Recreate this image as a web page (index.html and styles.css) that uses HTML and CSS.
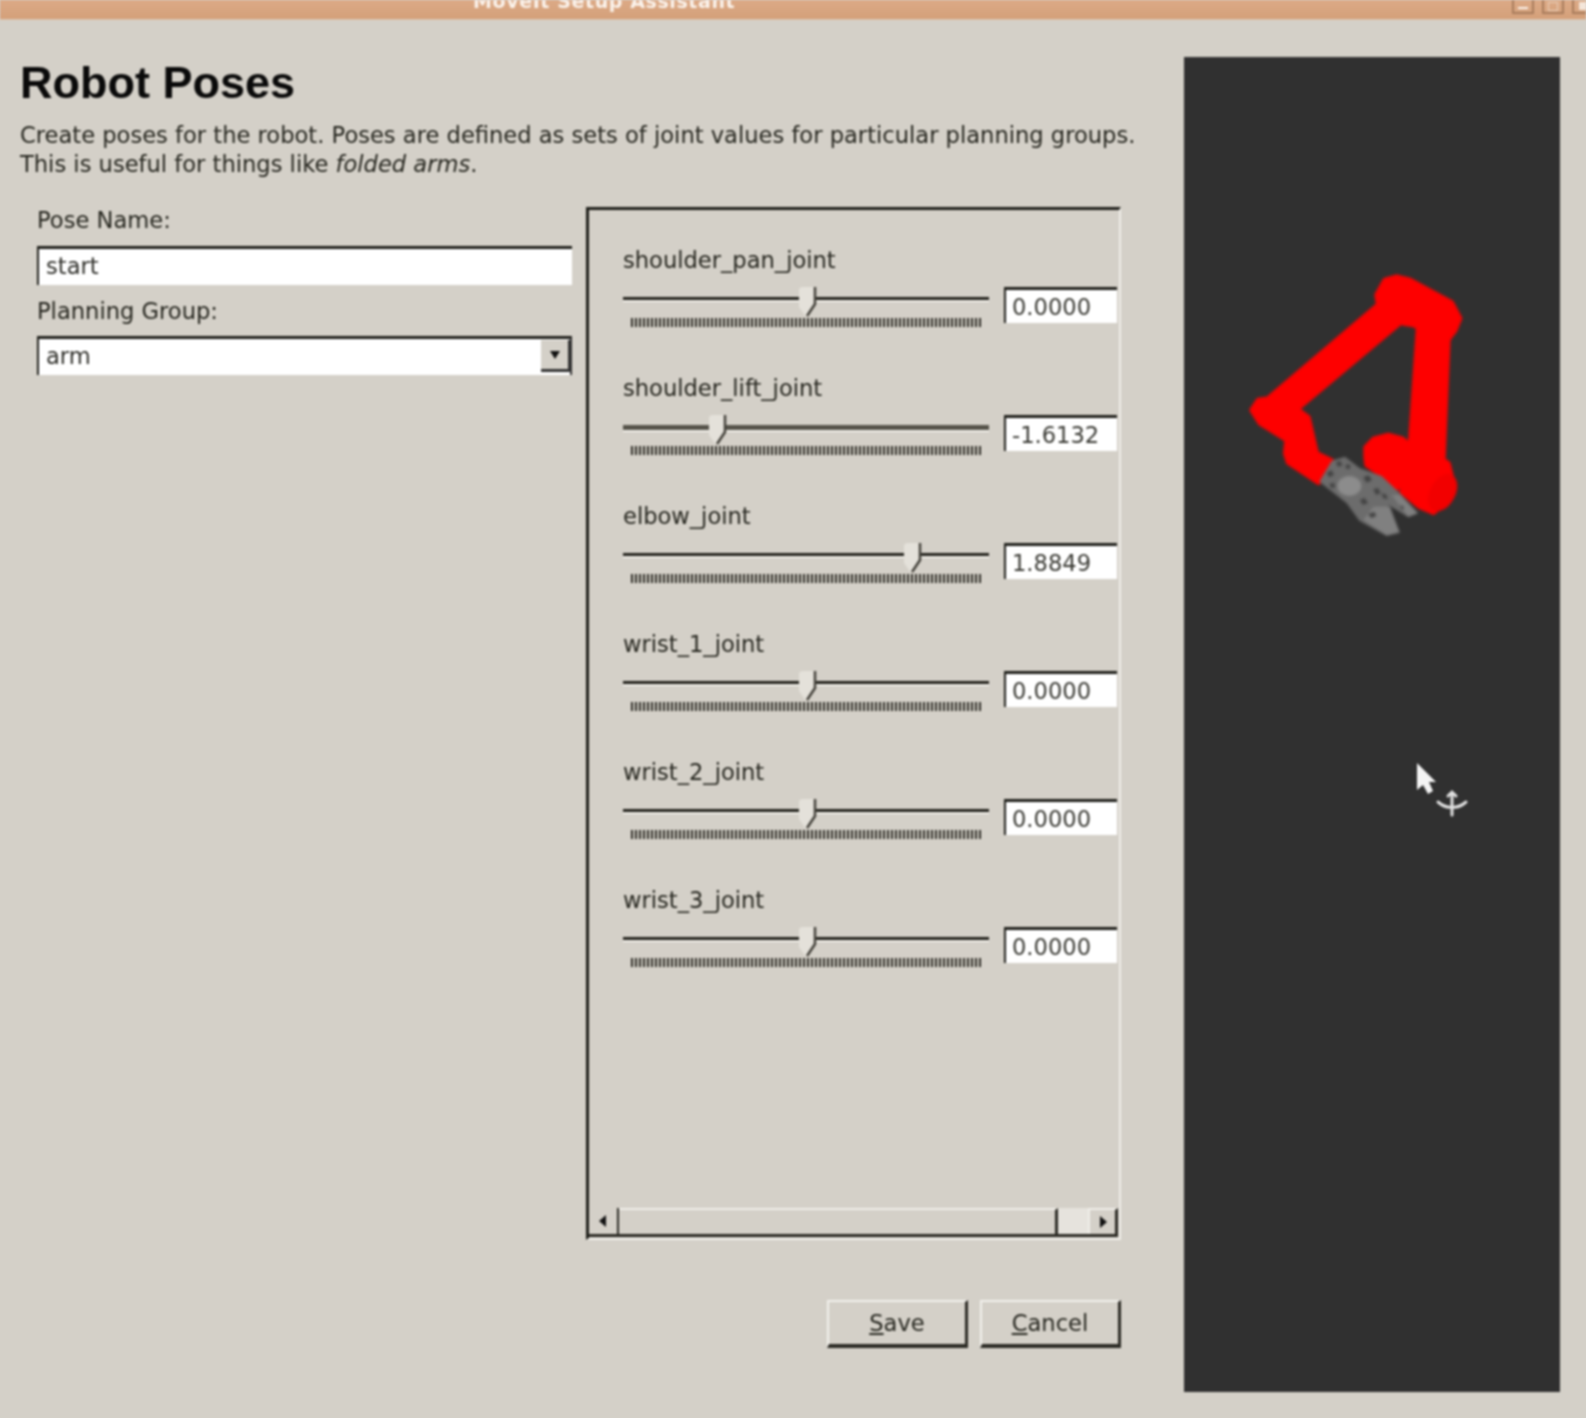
FILE: index.html
```html
<!DOCTYPE html>
<html lang="en">
<head>
<meta charset="utf-8">
<title>MoveIt Setup Assistant</title>
<link rel="stylesheet" href="styles.css">
</head>
<body>
<div class="app">
  <header class="titlebar">
    <span class="title">MoveIt Setup Assistant</span>
    <div class="winbtns">
      <span class="winbtn"><i class="w-min"></i></span>
      <span class="winbtn"><i class="w-max"></i></span>
      <span class="winbtn winbtn-last"><i class="w-close"></i></span>
    </div>
  </header>
  <main class="main">
    <section class="content">
      <h1 class="heading">Robot Poses</h1>
      <p class="desc">Create poses for the robot. Poses are defined as sets of joint values for particular planning groups.<br>This is useful for things like <em>folded arms</em>.</p>
      <div class="body">
        <div class="form">
          <div class="form-label">Pose Name:</div>
          <div class="field">start</div>
          <div class="form-label form-label-2">Planning Group:</div>
          <div class="field field-select">arm
            <span class="dropbtn"><svg width="14" height="12" viewBox="0 0 14 12"><path d="M2 2h10L7 10z" fill="#111"/></svg></span>
          </div>
        </div>
        <div class="scroll">
          <div class="rows">
            <div class="row"><div class="row-label">shoulder_pan_joint</div><div class="controls"><div class="slider"><div class="groove"></div><div class="ticks"></div><svg class="thumb" style="left:175px" width="21" height="31" viewBox="0 0 21 31"><path d="M1 3Q1 0 5 0H17V18L8 30L1 20z" fill="#e4e1da"/><path d="M17 0V17L9 29" fill="none" stroke="#45433c" stroke-width="2.5"/></svg></div><div class="num">0.0000</div></div></div>
            <div class="row"><div class="row-label">shoulder_lift_joint</div><div class="controls"><div class="slider"><div class="groove groove-thick"></div><div class="ticks"></div><svg class="thumb" style="left:85px" width="21" height="31" viewBox="0 0 21 31"><path d="M1 3Q1 0 5 0H17V18L8 30L1 20z" fill="#e4e1da"/><path d="M17 0V17L9 29" fill="none" stroke="#45433c" stroke-width="2.5"/></svg></div><div class="num">-1.6132</div></div></div>
            <div class="row"><div class="row-label">elbow_joint</div><div class="controls"><div class="slider"><div class="groove"></div><div class="ticks"></div><svg class="thumb" style="left:280px" width="21" height="31" viewBox="0 0 21 31"><path d="M1 3Q1 0 5 0H17V18L8 30L1 20z" fill="#e4e1da"/><path d="M17 0V17L9 29" fill="none" stroke="#45433c" stroke-width="2.5"/></svg></div><div class="num">1.8849</div></div></div>
            <div class="row"><div class="row-label">wrist_1_joint</div><div class="controls"><div class="slider"><div class="groove"></div><div class="ticks"></div><svg class="thumb" style="left:175px" width="21" height="31" viewBox="0 0 21 31"><path d="M1 3Q1 0 5 0H17V18L8 30L1 20z" fill="#e4e1da"/><path d="M17 0V17L9 29" fill="none" stroke="#45433c" stroke-width="2.5"/></svg></div><div class="num">0.0000</div></div></div>
            <div class="row"><div class="row-label">wrist_2_joint</div><div class="controls"><div class="slider"><div class="groove"></div><div class="ticks"></div><svg class="thumb" style="left:175px" width="21" height="31" viewBox="0 0 21 31"><path d="M1 3Q1 0 5 0H17V18L8 30L1 20z" fill="#e4e1da"/><path d="M17 0V17L9 29" fill="none" stroke="#45433c" stroke-width="2.5"/></svg></div><div class="num">0.0000</div></div></div>
            <div class="row"><div class="row-label">wrist_3_joint</div><div class="controls"><div class="slider"><div class="groove"></div><div class="ticks"></div><svg class="thumb" style="left:175px" width="21" height="31" viewBox="0 0 21 31"><path d="M1 3Q1 0 5 0H17V18L8 30L1 20z" fill="#e4e1da"/><path d="M17 0V17L9 29" fill="none" stroke="#45433c" stroke-width="2.5"/></svg></div><div class="num">0.0000</div></div></div>
          </div>
          <div class="hbar">
            <span class="hbtn hbtn-left"><svg width="10" height="14" viewBox="0 0 10 14"><path d="M8 1v12L1 7z" fill="#111"/></svg></span>
            <span class="hthumb"></span>
            <span class="hslot"></span>
            <span class="hbtn hbtn-right"><svg width="10" height="14" viewBox="0 0 10 14"><path d="M2 1v12l7-6z" fill="#111"/></svg></span>
          </div>
        </div>
      </div>
      <div class="footer">
        <button class="btn"><u>S</u>ave</button>
        <button class="btn"><u>C</u>ancel</button>
      </div>
    </section>
    <aside class="viewer">
      <svg class="robot" width="286" height="320" viewBox="0 0 858 960">
        <g fill="#fe0000" stroke="#fe0000" stroke-width="14" stroke-linejoin="round">
          <path d="M530 165L555 120L590 110L630 120L755 188L780 235L765 272L745 298L640 255L610 250L535 195z"/>
          <path d="M530 198L210 470L295 505L605 245z"/>
          <path d="M155 510L175 480L210 475L295 510L325 532L350 640L395 662L355 728L265 668L256 640L260 600L180 550z"/>
          <path d="M655 255L745 300L730 660L745 670L762 740L740 785L700 818L658 800L605 755L625 690z"/>
          <path d="M497 650L497 622L522 596L565 585L607 596L625 612L620 720L590 745L545 705L500 675z"/>
        </g>
        <ellipse cx="728" cy="758" rx="38" ry="60" transform="rotate(28 728 758)" fill="#f20000"/>
        <path d="M358 725L395 662L435 650L480 685L545 708L600 760L655 820L625 832L565 795L600 878L560 888L478 842L440 790z" fill="#6c6c6c"/>
        <ellipse cx="448" cy="738" rx="36" ry="30" fill="#8c8c8c"/>
        <path d="M520 800L570 800L598 876L560 886L490 840z" fill="#808080"/>
        <path d="M575 765L600 765L652 820L625 830z" fill="#808080"/>
        <path d="M380 700l14 -10l8 14l-14 8zM408 668l12 -6l8 14l-14 4zM388 732l14 -4l4 14l-12 2zM490 712l16 -6l10 14l-16 8zM520 748l14 -4l8 16l-14 4zM480 780l14 -6l10 16l-16 4zM545 760l14 4l4 14l-14 -4zM600 795l12 6l-4 10zM505 822l18 -6l6 12l-16 6zM440 672l12 4l-4 12l-12 -4z" fill="#424242"/>
      </svg>
      <svg class="cursor" width="60" height="56" viewBox="0 0 60 56">
        <path d="M2 2V29L8 24L13 33L18 30L14 21H21z" fill="#f4f4f4"/>
        <path d="M37 31V54M23 41Q30 47 37 46Q44 47 51 41M33 35L37 31L41 35" fill="none" stroke="#e0e0e0" stroke-width="3" stroke-linecap="round"/>
      </svg>
    </aside>
  </main>
</div>
</body>
</html>
```

FILE: styles.css
```css
html, body { margin: 0; padding: 0; }
body { width: 1586px; height: 1418px; overflow: hidden; background: #d4d0c8; }
.app {
  width: 1586px; height: 1418px; background: #d4d0c8;
  font-family: "DejaVu Sans", sans-serif; color: #26261f; filter: blur(0.8px);
}
.titlebar {
  height: 20px; overflow: hidden; display: flex; justify-content: space-between;
  background: linear-gradient(#dcaa86, #d4a07a); border-bottom: 1px solid #dcc4ae; box-sizing: border-box;
}
.title {
  margin: -9px 0 0 473px; height: 20px; line-height: 20px;
  font-size: 19px; font-weight: bold; color: #fbf3ec; letter-spacing: 0.6px;
}
.winbtns { display: flex; gap: 8px; height: 14px; margin-right: -8px; }
.winbtn {
  width: 22px; height: 14px; box-sizing: border-box; border: 2px solid #a87c5c; border-top: 0;
  display: flex; align-items: center; justify-content: center;
}
.w-min { width: 10px; height: 2px; margin-top: 3px; background: #fbf3ec; }
.w-max { width: 8px; height: 7px; border: 1px solid #e9cdb7; }
.w-close { width: 9px; height: 8px; background: #f4e6da; }
.main { display: flex; padding: 37px 26px 26px 20px; }
.content { width: 1164px; flex: none; }
.heading {
  margin: 5px 0 17px; font: bold 45px/42px "Liberation Sans", sans-serif; color: #0a0a0a;
}
.desc { margin: 0 0 29px; font-size: 22.6px; line-height: 28.5px; color: #26261f; white-space: nowrap; }
.body { display: flex; gap: 14px; padding-left: 17px; }
.form { width: 535px; flex: none; }
.form-label { font-size: 22.6px; line-height: 26px; margin-bottom: 13px; }
.form-label-2 { margin-top: 13px; margin-bottom: 12px; }
.field {
  position: relative; height: 39px; box-sizing: border-box; background: #fff;
  border-top: 3px solid #1f1f1a; border-left: 2px solid #1f1f1a; padding-left: 7px;
  font-size: 22.6px; line-height: 35px; color: #2e2e29;
}
.field-select { border-right: 2px solid #333; }
.dropbtn {
  position: absolute; right: 0; top: 1px; width: 29px; height: 32px; box-sizing: border-box;
  background: #d4d0c8; border-right: 2px solid #333; border-bottom: 3px solid #333;
  display: flex; align-items: center; justify-content: center;
}
.scroll {
  width: 535px; height: 1033px; box-sizing: border-box; display: flex; flex-direction: column;
  border-top: 3px solid #1f1f1a; border-left: 3px solid #1f1f1a;
  border-right: 2px solid #f0eee9; border-bottom: 2px solid #f0eee9;
}
.rows { flex: 1; padding: 37px 0 0 34px; }
.row { height: 128px; }
.row-label { font-size: 22.6px; line-height: 26px; margin-bottom: 14px; }
.controls { display: flex; gap: 15px; align-items: flex-start; }
.slider { position: relative; width: 366px; height: 40px; flex: none; }
.groove { margin-top: 10px; height: 3px; background: #23221c; border-bottom: 2px solid #f0eee8; }
.groove-thick { height: 5px; background: #56534a; }
.ticks {
  position: absolute; left: 8px; right: 8px; top: 31px; height: 9px;
  background: repeating-linear-gradient(90deg, #2d2c26 0 1.8px, #d4d0c8 1.8px 4px);
}
.thumb { position: absolute; top: 0; }
.num {
  width: 113px; height: 36px; box-sizing: border-box; background: #fff; flex: none;
  border-top: 3px solid #1f1f1a; border-left: 2px solid #1f1f1a; padding-left: 6px;
  font-size: 22.6px; line-height: 35px; color: #3a3a34; overflow: hidden;
}
.hbar { display: flex; height: 29px; margin: 0 1px 1px 0; border-bottom: 3px solid #2c2b25; box-sizing: border-box; }
.hbtn { width: 30px; flex: none; box-sizing: border-box; display: flex; align-items: center; justify-content: center; }
.hbtn-left { border-right: 2px solid #2c2b25; }
.hbtn-right { border-right: 3px solid #2c2b25; border-left: 2px solid #f0eee9; border-top: 2px solid #f0eee9; }
.hthumb { flex: 1; border-top: 2px solid #f0eee9; border-right: 3px solid #2c2b25; box-sizing: border-box; }
.hslot { width: 30px; flex: none; background: #e6e3dd; }
.footer { display: flex; justify-content: flex-end; gap: 12px; margin: 60px 63px 0 0; }
.btn {
  width: 141px; height: 48px; box-sizing: border-box; background: #d4d0c8; padding: 0;
  border-style: solid; border-width: 2px 3px 4px 2px;
  border-color: #f2f0ec #2c2b25 #2c2b25 #f2f0ec;
  font: 22.6px "DejaVu Sans", sans-serif; color: #26261f;
}
.viewer { position: relative; width: 376px; height: 1335px; flex: none; background: #303030; }
.robot { position: absolute; left: 16px; top: 183px; filter: blur(0.8px); }
.cursor { position: absolute; left: 231px; top: 704px; filter: blur(0.6px); }
```
